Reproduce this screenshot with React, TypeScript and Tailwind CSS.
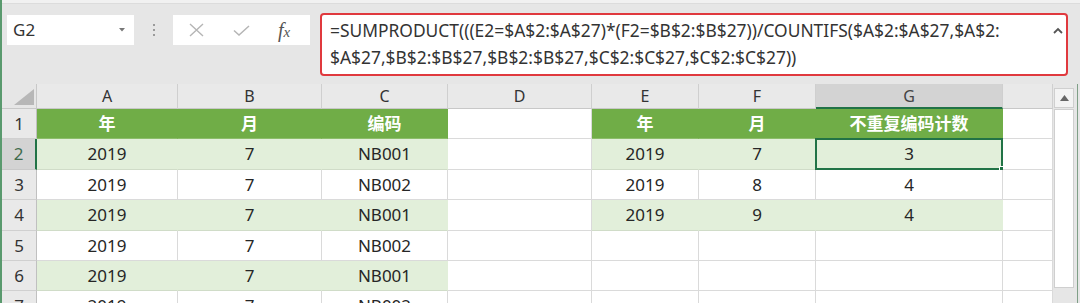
import React from "react";

type Fill = "g" | "l" | "";
const cols = [141, 144, 126, 144, 107, 117, 187, 50];
const colNames = ["A", "B", "C", "D", "E", "F", "G", ""];
const rowHeights = [30, 31, 30, 31, 30, 30, 30];

const data: string[][] = [
  ["年", "月", "编码", "", "年", "月", "不重复编码计数", ""],
  ["2019", "7", "NB001", "", "2019", "7", "3", ""],
  ["2019", "7", "NB002", "", "2019", "8", "4", ""],
  ["2019", "7", "NB001", "", "2019", "9", "4", ""],
  ["2019", "7", "NB002", "", "", "", "", ""],
  ["2019", "7", "NB001", "", "", "", "", ""],
  ["2019", "7", "NB002", "", "", "", "", ""],
];

function fillOf(r: number, c: number): Fill {
  if (r === 0) return c === 3 || c === 7 ? "" : "g";
  if (r === 1 || r === 3) return c === 3 || c === 7 ? "" : "l";
  if (r === 5) return c <= 2 ? "l" : "";
  return "";
}

function Cell({ r, c }: { r: number; c: number }) {
  const f = fillOf(r, c);
  const txt = data[r][c];
  const selected = r === 1 && c === 6;
  let cls = "";
  if (f === "g") cls = "bg-[#70ad47] border-r border-b border-r-[#70ad47] border-b-[#8cbd6a] text-white font-bold";
  else if (f === "l") cls = "bg-[#e2efda] border-r border-b border-r-[#e2efda] border-b-[#d0dcc8] text-[#262626]";
  else cls = "bg-white border-r border-b border-[#dadada] text-[#262626]";
  return (
    <div
      className={`relative flex items-center justify-center text-[17px] ${cls}`}
      style={{ width: cols[c], height: rowHeights[r] }}
    >
      {txt}
      {selected && (
        <>
          <div className="absolute -left-px -top-px -right-px -bottom-px border-2 border-[#217346]" />
          <div className="absolute -right-[4px] -bottom-[4px] w-[7px] h-[7px] bg-[#217346] border border-white" />
        </>
      )}
    </div>
  );
}

export default function App() {
  return (
    <div className="w-[1080px] h-[303px] overflow-hidden bg-[#e6e6e6] flex flex-col border-l-2 border-[#5a9a6e] font-['Noto_Sans','Noto_Sans_CJK_SC',sans-serif]">
      {/* top strip */}
      <div className="h-[4px] bg-[#f1f1f1] border-b border-[#dcdcdc] shrink-0" />
      {/* formula bar */}
      <div className="h-[80px] shrink-0 flex items-start pl-[5px] pt-[9px]">
        <div className="mt-[2px] w-[127px] h-[30px] bg-white flex items-center justify-between pl-[6px] pr-[9px]">
          <span className="text-[17px] text-[#333]">G2</span>
          <svg width="6" height="4" viewBox="0 0 6 4">
            <path d="M0 0 L6 0 L3 3.5 Z" fill="#777" />
          </svg>
        </div>
        <div className="mt-[2px] w-[39px] h-[30px] flex flex-col items-center justify-center gap-[3px]">
          <div className="w-[2px] h-[2px] bg-[#9a9a9a]" />
          <div className="w-[2px] h-[2px] bg-[#9a9a9a]" />
          <div className="w-[2px] h-[2px] bg-[#9a9a9a]" />
        </div>
        <div className="mt-[2px] w-[137px] h-[30px] bg-white flex items-center">
          <svg className="ml-[16px]" width="15" height="14" viewBox="0 0 15 14">
            <path d="M1 1 L14 13 M14 1 L1 13" stroke="#b5b5b5" strokeWidth="1.4" fill="none" />
          </svg>
          <svg className="ml-[29px]" width="17" height="11" viewBox="0 0 17 11">
            <path d="M1 5.5 L6 10 L16 1" stroke="#b5b5b5" strokeWidth="1.5" fill="none" />
          </svg>
          <span className="ml-[28px] font-['Liberation_Serif',serif] italic text-[#555] text-[20px] leading-none">
            f<span className="text-[15px]">x</span>
          </span>
        </div>
        <div className="ml-[10px] w-[748px] h-[63px] bg-white border-2 border-[#e0393e] rounded-[4px] flex items-start">
          <div className="flex-1 pl-[8px] pt-[2px] text-[17.4px] leading-[27px] text-[#333] whitespace-nowrap">
            =SUMPRODUCT(((E2=$A$2:$A$27)*(F2=$B$2:$B$27))/COUNTIFS($A$2:$A$27,$A$2:
            <br />
            $A$27,$B$2:$B$27,$B$2:$B$27,$C$2:$C$27,$C$2:$C$27))
          </div>
          <svg className="mt-[12px] mr-[3px]" width="10" height="7" viewBox="0 0 10 7">
            <path d="M1 6 L5 2 L9 6" stroke="#555" strokeWidth="1.8" fill="none" />
          </svg>
        </div>
      </div>
      {/* sheet */}
      <div className="flex flex-1 min-h-0">
        <div className="flex flex-col">
          {/* column headers */}
          <div className="flex h-[25px]">
            <div className="w-[35px] h-[25px] bg-[#e6e6e6] border-r border-b border-[#c8c8c8] flex items-end justify-end pr-[2px] pb-[3px]">
              <svg width="20" height="16" viewBox="0 0 20 16">
                <path d="M20 0 L20 16 L0 16 Z" fill="#b7b7b7" />
              </svg>
            </div>
            {colNames.map((n, i) => (
              <div
                key={i}
                className={`h-[25px] flex items-center justify-center text-[16px] border-r border-[#cfcfcf] ${
                  i === 6
                    ? "bg-[#d3d3d3] text-[#444] border-b-2 border-b-[#217346]"
                    : "bg-[#e9e9e9] text-[#333] border-b border-b-[#c8c8c8]"
                }`}
                style={{ width: cols[i] }}
              >
                {n}
              </div>
            ))}
          </div>
          {data.map((row, r) => (
            <div key={r} className="flex">
              <div
                className={`w-[35px] flex items-center justify-center text-[17px] border-b ${
                  r === 1
                    ? "bg-[#d3d3d3] text-[#3f6b4d] border-r-2 border-r-[#217346] border-b-[#c8c8c8]"
                    : "bg-[#e9e9e9] text-[#333] border-r border-r-[#c0c0c0] border-b-[#d0d0d0]"
                }`}
                style={{ height: rowHeights[r] }}
              >
                {r + 1}
              </div>
              {row.map((_, c) => (
                <Cell key={c} r={r} c={c} />
              ))}
            </div>
          ))}
        </div>
        {/* scrollbar */}
        <div className="w-[22px] bg-[#e6e6e6] flex flex-col pt-[4px]">
          <div className="h-[20px] mx-[1px] bg-[#f3f3f3] border border-[#cfcfcf] flex items-center justify-center">
            <svg width="9" height="6" viewBox="0 0 9 6">
              <path d="M0 6 L4.5 0 L9 6 Z" fill="#666" />
            </svg>
          </div>
          <div className="mt-[1px] mx-[1px] h-[179px] bg-white border border-[#cfcfcf]" />
        </div>
        <div className="w-[2px] bg-[#e6e6e6]" />
        <div className="w-[1px] bg-[#7f9f87]" />
        <div className="w-[2px] bg-[#e6e6e6]" />
      </div>
    </div>
  );
}
